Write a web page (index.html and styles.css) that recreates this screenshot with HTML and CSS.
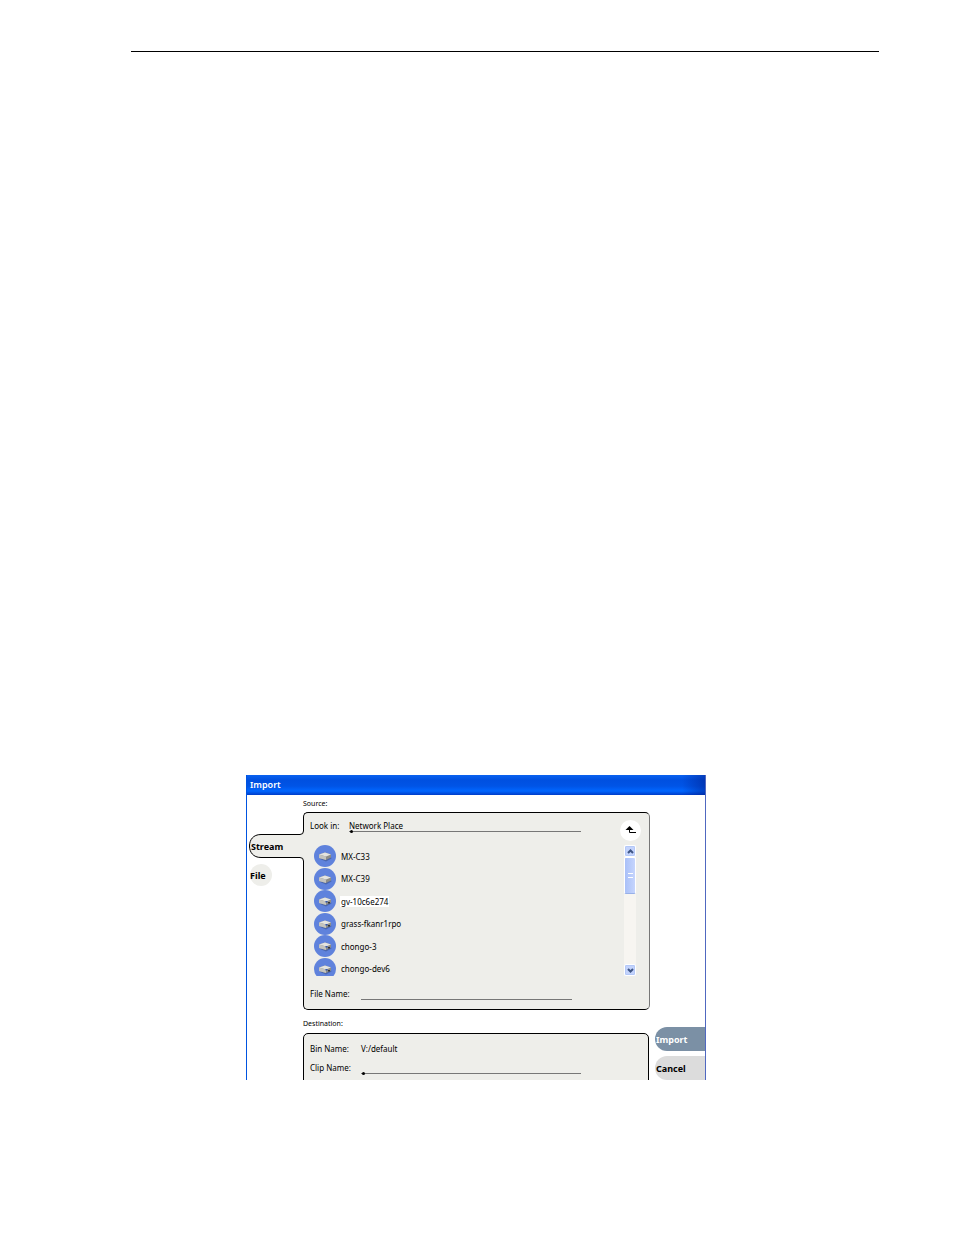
FILE: index.html
```html
<!DOCTYPE html>
<html lang="en">
<head>
  <meta charset="UTF-8">
  <meta name="viewport" content="width=device-width, initial-scale=1.0">
  <title>Import</title>
  <link rel="stylesheet" href="styles.css">
</head>
<body>
  <svg width="0" height="0" class="defs" aria-hidden="true">
    <symbol id="server" viewBox="0 0 22 22">
      <circle cx="11" cy="11" r="11" fill="#5f82dc"/>
      <path d="M6 14L12 16.500 17.500 13.500 17 12Z" fill="#4a66ae"/>
      <path d="M5 9.500L11 7.500 17 9.500V12.500L12 15 5 13Z" fill="#8d8d88"/>
      <path d="M5 9.500L11 7.500 17 9.500 12 11.500Z" fill="#e4e4e0"/>
      <path d="M5 9.500L12 11.500V15L5 13Z" fill="#c4c4be"/>
    </symbol>
    <symbol id="server-lit" viewBox="0 0 22 22">
      <use href="#server"/>
      <path d="M11.500 11H13.500V12.500H11.500Z" fill="#2f55b0"/>
      <path d="M14 12H16V13.500H14Z" fill="#333"/>
    </symbol>
  </svg>

  <div class="page">
    <hr class="rule">

    <div class="dialog">
      <h1 class="titlebar">Import</h1>
      <div class="content">
        <nav class="tabs">
          <button type="button" class="tab-stream">
            <svg width="57" height="34" viewBox="0 0 57 34" aria-hidden="true">
              <path d="M57 0H56V1Q56 5 52 5.500H14C6 5.500 2.500 11 2.500 17S6 28.500 14 28.500H52Q56 29 56 33V34H57Z" fill="#eeeeea"/>
              <path d="M56.500 0V2Q56.500 5.500 53 5.500H14C6 5.500 2.500 11 2.500 17S6 28.500 14 28.500H53Q56.500 28.500 56.500 32V34" fill="none" stroke="#000"/>
            </svg>
            <span>Stream</span>
          </button>
          <button type="button" class="tab-file">File</button>
        </nav>

        <main class="main">
          <h2>Source:</h2>
          <section class="panel source">
            <div class="look-row">
              <label for="look-in">Look in:</label>
              <select id="look-in">
                <option>Network Place</option>
              </select>
              <i class="caret"></i>
              <button type="button" class="up" aria-label="Up one level">
                <svg width="21" height="21" viewBox="0 0 21 21" aria-hidden="true">
                  <path d="M5.500 10L9.500 6 13.500 10Z"/>
                  <path d="M9.500 9V12.500H16" fill="none" stroke="#000"/>
                </svg>
              </button>
            </div>

            <div class="browser">
              <ul class="places">
                <li><svg><use href="#server"/></svg><span>MX-C33</span></li>
                <li><svg><use href="#server"/></svg><span>MX-C39</span></li>
                <li class="selected"><svg><use href="#server-lit"/></svg><span>gv-10c6e274</span></li>
                <li><svg><use href="#server-lit"/></svg><span>grass-fkanr1rpo</span></li>
                <li><svg><use href="#server-lit"/></svg><span>chongo-3</span></li>
                <li><svg><use href="#server-lit"/></svg><span>chongo-dev6</span></li>
              </ul>
              <div class="scrollbar">
                <button type="button" aria-label="Scroll up">
                  <svg width="9" height="9" viewBox="0 0 9 9"><path d="M2 6L4.500 3.500 7 6"/></svg>
                </button>
                <div class="thumb"><i></i></div>
                <button type="button" class="down" aria-label="Scroll down">
                  <svg width="9" height="9" viewBox="0 0 9 9"><path d="M2 3L4.500 5.500 7 3"/></svg>
                </button>
              </div>
            </div>

            <div class="file-row">
              <label for="file-name">File Name:</label>
              <input type="text" id="file-name">
            </div>
          </section>

          <h2 class="dest-title">Destination:</h2>
          <section class="panel dest">
            <div class="field">
              <span>Bin Name:</span>
              <span>V:/default</span>
            </div>
            <div class="field clip">
              <label for="clip-name">Clip Name:</label>
              <input type="text" id="clip-name">
              <i class="caret"></i>
            </div>
          </section>
        </main>

        <div class="actions">
          <button type="button" class="import">Import</button>
          <button type="button" class="cancel">Cancel</button>
        </div>
      </div>
    </div>
  </div>
</body>
</html>
```
FILE: styles.css
```css
* {
  box-sizing: border-box;
}

body {
  margin: 0;
  background-color: #fff;
  color: #000;
  font-family: "Noto Sans", "Open Sans", sans-serif;
  font-size: 8px;
  line-height: 11px;
}

button,
input,
select {
  margin: 0;
  padding: 0;
  border: none;
  border-radius: 0;
  background: none;
  color: inherit;
  font: inherit;
}

svg {
  display: block;
}

.defs {
  position: absolute;
}

.page {
  padding: 51px 75px 100px 131px;
}

.rule {
  height: 1px;
  margin: 0 0 723px;
  border: none;
  background-color: #000;
}

.dialog {
  max-width: 460px;
  margin-left: 115px;
  border: solid #0053e0;
  border-width: 0 1px;
  border-right-color: #5068c0;
  overflow: hidden;
}

.titlebar {
  height: 20px;
  margin: 0;
  padding-left: 3px;
  background:
    linear-gradient(to right, transparent 95%, rgba(0, 30, 140, 0.5)),
    linear-gradient(#0a62f0, #0050e0 25%, #0054e6 55%, #0066ff 80%, #003cc8);
  color: #fff;
  font-size: 9px;
  font-weight: 600;
  line-height: 20px;
}

.content {
  display: grid;
  grid-template-columns: 56px minmax(0, 1fr) 55px;
  height: 285px;
}

.tabs {
  display: flex;
  flex-direction: column;
  align-items: flex-start;
  padding-top: 34px;
  font-size: 9px;
  font-weight: bold;
}

.tab-stream {
  display: grid;
  position: relative;
  z-index: 1;
  width: 57px;
}

.tab-stream svg,
.tab-stream span {
  grid-area: 1 / 1;
}

.tab-stream span {
  align-self: center;
  padding-left: 4px;
  text-align: left;
}

.tab-file {
  width: 22px;
  height: 22px;
  margin: 1px 0 0 3px;
  border-radius: 50%;
  background-color: #eeeeea;
  text-align: left;
}

h2 {
  margin: 4px 0 3px;
  font-size: 7px;
  font-weight: normal;
  line-height: 10px;
}

.dest-title {
  margin: 9px 0 4px;
}

.panel {
  border: 1px solid #000;
  border-radius: 5px;
  background-color: #eeeeea;
}

.source {
  padding: 7px 8px 9px 6px;
  border-right-color: #777;
}

.look-row {
  display: flex;
  position: relative;
  align-items: flex-start;
  height: 21px;
}

.look-row label {
  width: 39px;
}

.look-row select {
  appearance: none;
  width: 232px;
  height: 12px;
  border-bottom: 1px solid #777;
  line-height: 11px;
}

.up {
  width: 21px;
  height: 21px;
  margin-left: auto;
  border-radius: 50%;
  background-color: #fff;
}

.browser {
  display: flex;
  justify-content: space-between;
  height: 131px;
  margin: 4px 5px 12px 4px;
  overflow: hidden;
}

.places {
  display: flex;
  flex-direction: column;
  justify-content: space-between;
  height: 135px;
  margin: 0;
  padding: 0;
  list-style: none;
}

.places li {
  display: flex;
  align-items: center;
  gap: 4px;
}

.places svg {
  width: 22px;
  height: 22px;
}

.places span {
  padding: 0 1px;
}

.selected span {
  background-color: #fff;
}

.scrollbar {
  display: flex;
  flex-direction: column;
  width: 12px;
  background-color: #f7f5f1;
}

.scrollbar button {
  display: grid;
  place-items: center;
  height: 12px;
  border: 1px solid #fff;
  border-radius: 2px;
  background-color: #c3d3fc;
  box-shadow: inset 0 0 0 1px #b3c8f8;
}

.scrollbar path {
  fill: none;
  stroke: #3f5685;
  stroke-width: 2;
}

.scrollbar .down {
  margin-top: auto;
}

.thumb {
  display: grid;
  place-items: center;
  height: 37px;
  border: 1px solid #fff;
  border-bottom-color: #98b0e8;
  border-radius: 2px;
  background: linear-gradient(to right, #a9c0f8, #c6d5fd);
}

.thumb i {
  width: 5px;
  height: 5px;
  border: solid #fff;
  border-width: 1px 0;
}

.file-row {
  display: flex;
  height: 12px;
}

.file-row label,
.field > :first-child {
  width: 51px;
}

.file-row input,
.field input {
  width: 211px;
  height: 12px;
  border-bottom: 1px solid #777;
}

.dest {
  height: 60px;
  margin-right: 1px;
  padding: 9px 6px;
}

.field {
  display: flex;
  height: 11px;
}

.field input {
  width: 220px;
}

.clip {
  position: relative;
  height: 12px;
  margin-top: 8px;
}

/* insertion marker at the start of the line */
.caret {
  position: absolute;
  bottom: -1px;
  left: 52px;
  width: 3px;
  height: 3px;
  border-radius: 50%;
  background-color: #000;
}

.look-row .caret {
  bottom: 8px;
  left: 40px;
}

.actions {
  display: flex;
  flex-direction: column;
  gap: 5px;
  padding: 232px 0 0 5px;
  font-size: 9px;
  font-weight: bold;
}

.actions button {
  flex: none;
  height: 24px;
  padding-left: 1px;
  border-radius: 12px 0 0 12px;
  text-align: left;
}

.import {
  background-color: #7b90a5;
  color: #fff;
}

.cancel {
  background-color: #dcdcdc;
}
```
